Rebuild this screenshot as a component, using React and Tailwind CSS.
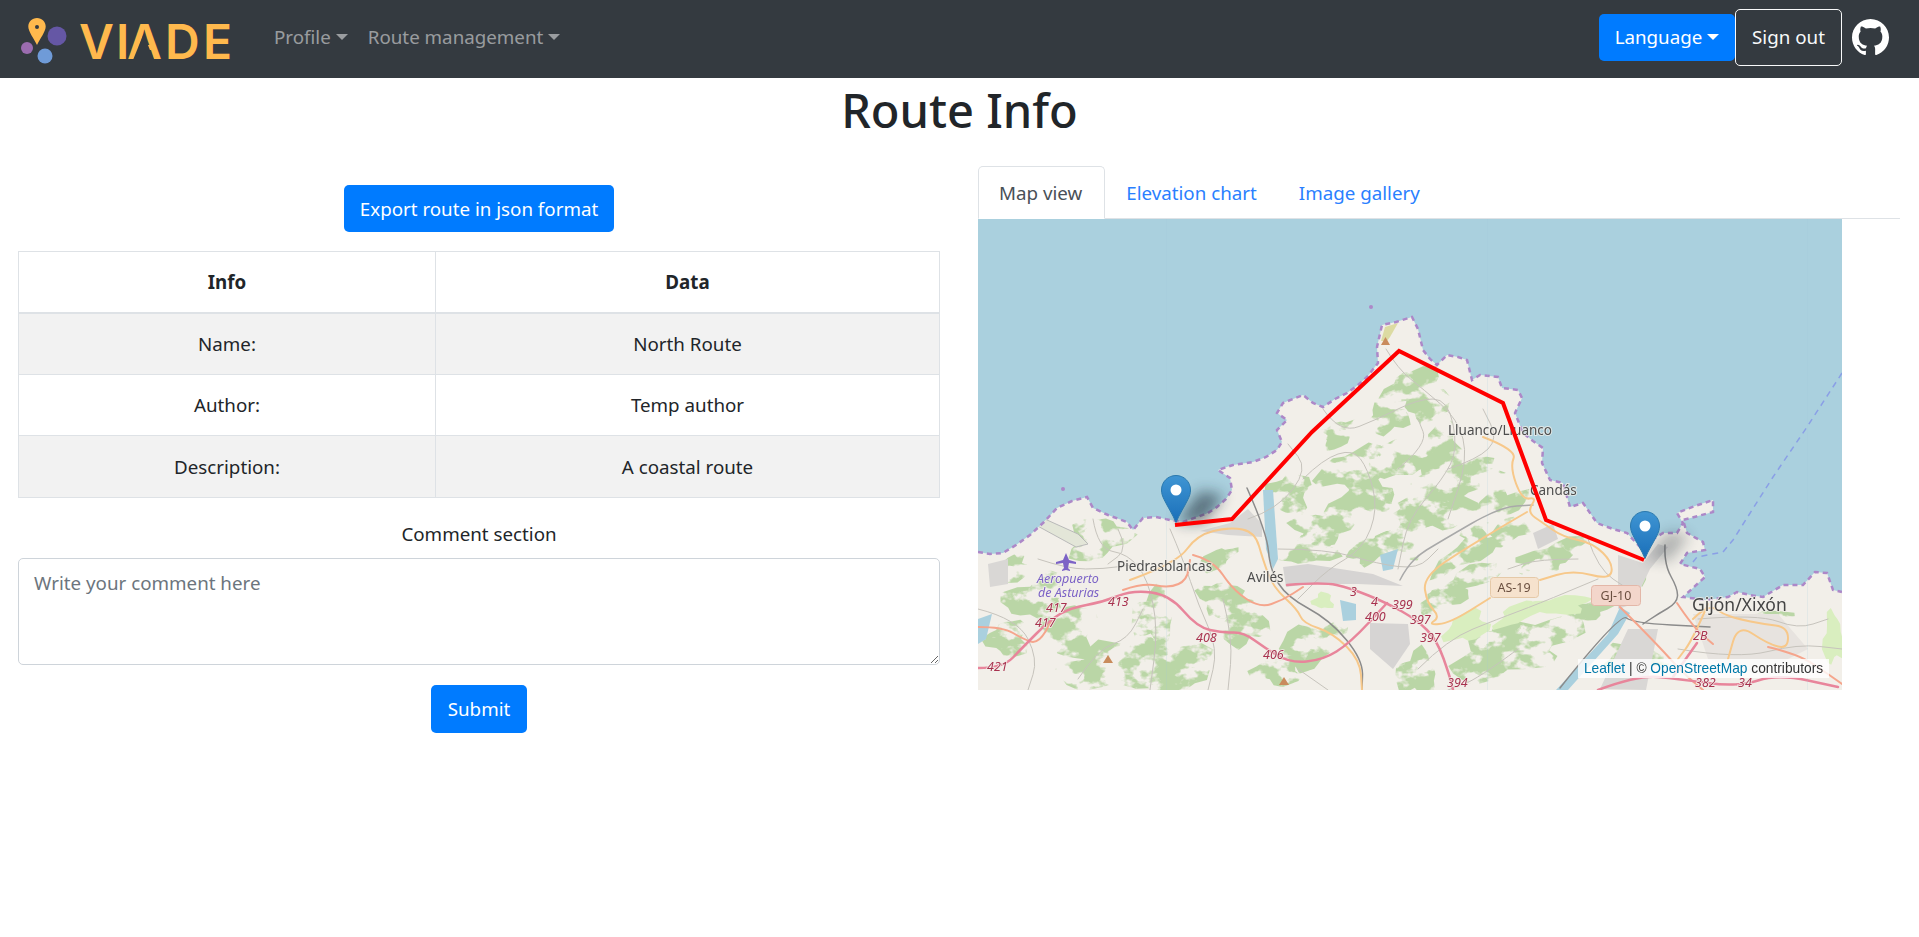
import React from "react";

// wobbly shape used as a mask for woods on the map
const blob = (cx, cy, rx, ry, rot = 0) => {
  const a = (rot * Math.PI) / 180;
  const pts = [];
  for (let i = 0; i < 18; i++) {
    const t = (i / 18) * Math.PI * 2;
    const w = 1 + 0.22 * Math.sin(t * 3 + cx) + 0.16 * Math.sin(t * 5 + cy);
    const x = Math.cos(t) * rx * w;
    const y = Math.sin(t) * ry * w;
    pts.push(
      `${(cx + x * Math.cos(a) - y * Math.sin(a)).toFixed(1)},${(cy + x * Math.sin(a) + y * Math.cos(a)).toFixed(1)}`
    );
  }
  return pts.join(" ");
};

// rounds a "x,y x,y" list into a path, roads on the tiles have no corners
const smooth = (list) => {
  const p = list.split(" ").map((s) => s.split(",").map(Number));
  let d = `M${p[0][0]} ${p[0][1]}`;
  for (let i = 1; i < p.length - 1; i++) {
    const mx = (p[i][0] + p[i + 1][0]) / 2;
    const my = (p[i][1] + p[i + 1][1]) / 2;
    d += `Q${p[i][0]} ${p[i][1]} ${mx} ${my}`;
  }
  const l = p[p.length - 1];
  return `${d}L${l[0]} ${l[1]}`;
};

const coastLine =
  "0,333 12,335 25,334 38,326 52,316 66,303 79,289 94,282 109,278 115,289 130,296 149,303 155,311 165,299 178,298 192,301 205,303 219,298 230,294 239,288 248,280 254,271 252,259 240,251 255,246 275,243 288,238 299,231 304,223 299,211 309,201 299,194 305,184 325,176 335,184 345,188 357,180 369,174 380,166 389,158 400,144 399,128 404,106 418,103 434,98 440,110 445,131 452,140 459,146 469,136 480,138 489,141 494,161 502,156 520,158 524,169 540,171 544,179 537,194 545,214 555,222 565,229 564,244 572,261 585,264 592,288 605,284 619,304 635,310 649,314 662,328 672,322 685,314 699,314 705,304 699,294 717,287 735,281 735,293 720,297 705,301 709,314 725,323 727,331 709,334 702,345 722,350 727,358 716,368 705,378 728,381 750,378 759,373 772,376 785,378 795,372 805,366 825,366 837,353 849,354 855,371 864,373";
const coast = `${coastLine} 864,471 0,471`;

const woods = [
  [120, 320, 30, 20, -20], [60, 378, 34, 20, -20], [92, 412, 26, 26, 0], [132, 450, 50, 22, 0],
  [192, 446, 44, 26, 10], [265, 402, 22, 26, 0], [335, 425, 34, 20, -20], [242, 380, 20, 18, 0],
  [175, 398, 20, 26, 0], [375, 251, 34, 20, -15], [342, 311, 28, 16, 0], [382, 284, 38, 20, -25],
  [422, 241, 26, 18, 0], [459, 284, 34, 30, 0], [332, 331, 30, 14, -10], [312, 274, 20, 20, 0],
  [425, 321, 28, 18, -20], [465, 234, 20, 30, 0], [439, 170, 30, 20, 0], [449, 188, 22, 14, 0],
  [489, 261, 38, 16, -30], [455, 278, 32, 14, -30], [442, 296, 26, 12, -20], [515, 291, 38, 13, -30],
  [489, 334, 38, 12, -30], [535, 311, 26, 11, -20], [575, 334, 36, 10, -20], [562, 351, 20, 9, -10],
  [489, 361, 38, 10, -25], [465, 380, 26, 11, -20], [555, 420, 50, 20, -15], [522, 438, 50, 22, -10],
  [439, 455, 20, 22, 0], [612, 391, 20, 9, -10], [30, 420, 20, 18, 0], [392, 330, 22, 12, -30],
  [360, 215, 20, 12, -30], [410, 200, 20, 14, 0], [300, 452, 24, 14, 0], [30, 352, 24, 12, -20],
  [240, 340, 18, 9, -30], [660, 350, 10, 18, 20], [790, 400, 28, 8, 0], [655, 440, 30, 14, 0],
];

const lightWoods = [
  [489, 408, 22, 14, -20], [582, 386, 30, 9, -5], [540, 395, 24, 9, -25], [855, 420, 10, 25, 0], [345, 382, 10, 8, 0],
];

const minorRoads = [
  "115,300 120,330 150,335 170,360 180,410 172,471",
  "192,310 205,340 220,385 240,430 230,471",
  "325,260 345,240 375,230 390,250 400,290 385,330 350,350 320,380",
  "345,190 362,215 400,200 440,180 470,180 480,230 465,260 430,300 420,350",
  "408,130 420,150 445,170 480,200 490,240 470,300",
  "300,330 350,330 400,345 440,350 460,330",
  "440,450 470,420 520,400 560,385 620,360",
  "60,340 90,350 125,350 160,345",
  "0,390 40,400 60,440 50,471",
  "245,380 255,420 250,471",
  "610,320 620,350 650,370",
  "600,340 560,340 530,350",
  "720,400 780,395 820,410 850,400",
  "700,430 760,440 820,425 864,430",
  "540,430 500,460 470,471",
  "320,450 350,471",
  "270,300 300,290 330,250 310,225",
  "420,250 450,225 440,200",
  "470,250 500,240 520,220 505,190",
  "140,310 150,330 130,345",
  "100,460 120,430 150,420 165,390",
];

const roads = [
  ["269,269 289,314 292,351 309,378 352,401 385,441 384,471", "#8b8b8b", 1.5],
  ["422,361 432,341 465,321 522,288 555,286", "#a9a9a9", 1.5],
  ["582,469 642,394 655,404 732,408", "#8b8b8b", 1.5],
  ["687,326 686,345 700,370 699,384 680,395 665,405", "#8b8b8b", 1.5],
  ["152,361 199,344 219,316 252,308 277,313 285,341 295,368 320,391 325,404 355,414 382,441 384,471", "#f7c88a", 2],
  ["505,218 539,231 532,248 544,281 559,278 549,293 565,304 585,318 615,324 635,344 632,361 595,351 562,361", "#f7c88a", 2],
  ["549,293 489,328 445,358 449,384 462,398 450,406 472,404 512,379", "#f7c88a", 2],
  ["715,400 730,385 745,395 760,400 785,405 810,408 810,430 790,425 760,405 750,440", "#f7c88a", 2],
  ["730,385 715,420 700,440", "#f7c88a", 2],
  ["0,408 25,408 45,420 60,425 75,400", "#f5a58c", 2],
  ["215,336 235,341 255,371 282,389 305,381 325,368", "#f5a58c", 2],
  ["145,371 165,364 192,369 209,361 212,341", "#f5a58c", 2],
  ["642,388 675,421 705,454 725,471", "#f5a58c", 2],
  ["699,384 715,408 735,425", "#f5a58c", 2],
  ["790,428 820,435 850,455 864,465", "#f5a58c", 2],
  ["0,449 25,449 45,428 72,401 92,389 125,383 155,371 192,376 219,408 245,414 265,413 287,429 312,444 345,441 372,424 409,384", "#e8859b", 2.5],
  ["309,366 345,363 372,369 409,384 439,401 459,421 472,458 475,471", "#e8859b", 2.5],
  ["695,458 719,424", "#e8859b", 2.5],
  ["620,471 660,456 700,460 760,468 800,455 860,468", "#e8859b", 2.5],
];

const numbers = [
  ["417", 68, 393], ["417", 57, 408], ["413", 130, 387], ["421", 9, 452], ["408", 218, 423],
  ["406", 285, 440], ["3", 372, 377], ["4", 393, 387], ["399", 414, 390], ["400", 387, 402],
  ["397", 432, 405], ["397", 442, 423], ["394", 469, 468], ["2B", 715, 421], ["382", 717, 468], ["34", 760, 468],
];

const Pin = ({ x, y }) => (
  <g transform={`translate(${x - 15} ${y - 48})`}>
    <path
      d="M15 .5C6.900 .5.500 6.900.500 15c0 3.500 1 6.200 2.600 9.500C6.500 31.500 12 40 15 47.500 18 40 23.500 31.500 26.900 24.500 28.500 21.200 29.500 18.500 29.500 15 29.500 6.900 23.100.5 15 .5z"
      fill="url(#pin)"
      stroke="#2a78ad"
    />
    <circle cx="15" cy="15" r="5.500" fill="#fff" />
  </g>
);

const RouteMap = () => (
  <svg viewBox="0 0 864 471" className="block w-full h-full">
    <defs>
      <linearGradient id="pin" x1="0" y1="0" x2="0" y2="1">
        <stop offset="0" stopColor="#3f95d3" />
        <stop offset="1" stopColor="#1a6fb9" />
      </linearGradient>
      <filter id="soft"><feGaussianBlur stdDeviation="0.45" /></filter>
      <filter id="shade" x="-60%" y="-60%" width="220%" height="220%"><feGaussianBlur stdDeviation="7" /></filter>
      <filter id="forest" x="0" y="0" width="864" height="471" filterUnits="userSpaceOnUse" colorInterpolationFilters="sRGB">
        <feTurbulence type="fractalNoise" baseFrequency="0.04 0.055" numOctaves="4" seed="8" result="n" />
        <feColorMatrix in="n" type="matrix" values="0 0 0 0 0.73  0 0 0 0 0.84  0 0 0 0 0.65  10 0 0 0 -4.300" result="patch" />
        <feComposite in="patch" in2="SourceAlpha" operator="in" />
      </filter>
      <clipPath id="land"><polygon points={coast} /></clipPath>
    </defs>
    <rect width="864" height="471" fill="#aad0de" />
    <g filter="url(#soft)">
      <polygon points={coast} fill="#f2efe9" />
      <g clipPath="url(#land)">
        <g filter="url(#forest)">
          {woods.map((w, i) => (
            <polygon key={i} points={blob(...w)} fill="#000" />
          ))}
        </g>
        {lightWoods.map((w, i) => (
          <polygon key={i} points={blob(...w)} fill="#d9eebf" />
        ))}
        <polygon points="305,348 330,345 395,355 425,367 380,365 330,365 308,368" fill="#d6d4d3" />
        <polygon points="392,404 430,405 432,425 415,450 392,430" fill="#d6d4d3" />
        <polygon points="555,314 575,305 580,320 560,330" fill="#d6d4d3" />
        <polygon points="222,312 252,304 270,290 284,305 284,318 250,316" fill="#d9d7d5" />
        <polygon points="640,336 665,344 680,325 690,328 672,350 655,385 640,390" fill="#d9d7d5" />
        <polygon points="622,470 650,410 680,410 668,471" fill="#d9d7d5" />
        <polygon points="715,395 800,395 830,430 780,455 730,440" fill="#e7e3df" />
        <polygon points="10,345 30,340 30,365 12,368" fill="#d9d7d5" />
        <polygon points="58,296 100,315 110,325 98,328 56,305" fill="#e3e6d8" stroke="#b9b9b9" />
        <polygon points="403,122 407,108 420,104 412,118 409,122" fill="#dcdba2" />
        <polygon points="285,271 295,271 300,340 295,350 288,330" fill="#aad0de" />
        <polygon points="362,381 378,385 378,401 365,402" fill="#aad0de" />
        <polygon points="402,336 420,330 415,350 405,352" fill="#aad0de" />
        <polygon points="0,400 14,395 8,420 0,425" fill="#aad0de" />
        <polygon points="642,388 652,394 640,415 590,471 578,471 630,415" fill="#aad0de" />
        <g fill="none" strokeLinecap="round">
          {minorRoads.map((d, i) => (
            <path key={i} d={smooth(d)} stroke="#c6c3bc" strokeWidth="1" />
          ))}
          {roads.map(([d, color, w], i) => (
            <path key={i} d={smooth(d)} stroke={color} strokeWidth={w} />
          ))}
        </g>
      </g>
      <polyline points={coastLine} fill="none" stroke="#ad88c8" strokeWidth="2.500" strokeDasharray="5 4" />
      <circle cx="85" cy="270" r="2" fill="#ad88c8" />
      <circle cx="393" cy="88" r="2" fill="#ad88c8" />
      <polygon points="403,126 412,126 407.500,118" fill="#c98b5c" />
      <polygon points="125,444 135,444 130,436" fill="#c98b5c" />
      <polygon points="301,466 311,466 306,458" fill="#c98b5c" />
      <polyline points="864,154 829,208 795,258 755,321 745,333 719,338 715,343" fill="none" stroke="#8a9fe6" strokeWidth="1.500" strokeDasharray="6 5" />
      <rect x="188" width="1" height="471" fill="#9fc7d6" opacity="0.18" />
      <rect x="509" width="1" height="471" fill="#9fc7d6" opacity="0.18" />
      <rect x="829" width="1" height="471" fill="#9fc7d6" opacity="0.18" />

      <g className="italic [paint-order:stroke]" fill="#a8324f" fontSize="12.500" stroke="#f2efe9" strokeWidth="1.500">
        {numbers.map(([t, x, y], i) => (
          <text key={i} x={x} y={y}>{t}</text>
        ))}
      </g>
      <g fontSize="12.500" fill="#7b62c6" className="italic [paint-order:stroke]" stroke="#f2efe9" strokeWidth="1.500">
        <text x="59" y="364">Aeropuerto</text>
        <text x="60" y="378">de Asturias</text>
      </g>
      <path d="M89 302l3 7 7 2v2l-7-1-1 5 2 2v1l-4-1-4 1v-1l2-2-1-5-7 1v-2l7-2z" fill="#7b62c6" transform="translate(-1 32)" />
      <g fill="#4d4d4d" fontSize="13.500" className="[paint-order:stroke]" stroke="#f2efe9" strokeOpacity="0.75" strokeWidth="2">
        <text x="139" y="352">Piedrasblancas</text>
        <text x="269" y="363">Avilés</text>
        <text x="470" y="216">Lluanco/Lluanco</text>
        <text x="552" y="276">Candás</text>
        <text x="714" y="392" fontSize="17.500" fill="#444">Gijón/Xixón</text>
      </g>
      <rect x="512.500" y="358.500" width="48" height="20" rx="3" fill="#f6e2cd" stroke="#e5c9a8" />
      <text x="536" y="373" textAnchor="middle" fontSize="12.500" fill="#6b5040">AS-19</text>
      <rect x="613.500" y="366.500" width="49" height="20" rx="3" fill="#f3d6cb" stroke="#e3b7a8" />
      <text x="638" y="381" textAnchor="middle" fontSize="12.500" fill="#6b5040">GJ-10</text>
    </g>

    <path d="M198 304L222 272L246 276L226 304Z" fill="#1c2c36" opacity="0.55" filter="url(#shade)" />
    <path d="M667 340L690 312L712 316L692 342Z" fill="#1c2c36" opacity="0.3" filter="url(#shade)" />
    <Pin x={198} y={304} />
    <Pin x={667} y={340} />
    <polyline
      points="197,306 254,300 334,213 421,132 525,184 568,301 666,341"
      fill="none"
      stroke="#ff0000"
      strokeWidth="4"
      strokeLinejoin="miter"
    />
  </svg>
);

const Caret = () => (
  <span className="inline-block ml-[5px] w-0 h-0 border-x-[6px] border-t-[6px] border-x-transparent border-t-current" />
);

const NavMenu = ({ label }) => (
  <a className="flex items-center text-white/50 leading-[30px]">
    {label}
    <Caret />
  </a>
);

const Row = ({ label, value, striped }) => (
  <tr className={striped ? "bg-[#f2f2f2]" : "bg-white"}>
    <td className="border border-[#dee2e6] p-[15px] leading-[30px] w-[417px]">{label}</td>
    <td className="border border-[#dee2e6] p-[15px] leading-[30px]">{value}</td>
  </tr>
);

export default function App() {
  return (
    <div className="min-h-screen bg-white text-[#212529] text-[18.75px] font-['Noto_Sans',sans-serif]">
      <nav className="flex items-center justify-between h-[78px] bg-[#343a40] pb-[4px] pl-[18px] pr-[30px]">
        <div className="flex items-center">
          <svg width="220" height="64" viewBox="18 5 220 64">
            <circle cx="57" cy="36" r="9.500" fill="#6557a5" />
            <circle cx="27" cy="48" r="6" fill="#9b6cb0" />
            <circle cx="45" cy="56" r="7.500" fill="#6f9bd8" />
            <path d="M37 18c-5 0-8.700 3.700-8.700 8.500 0 5 5.500 12 8.700 18.500 3.200-6.500 8.700-13.500 8.700-18.500 0-4.800-3.700-8.500-8.700-8.500z" fill="#ffb94d" />
            <circle cx="37" cy="27" r="2" fill="#343a40" />
            <text x="79 116 127 165 203" y="59" fontSize="48" fontWeight="600" fill="#ffb94d" fontFamily="Inter, sans-serif">
              VIADE
            </text>
            <polygon points="143.500,34 133,60 154,60" fill="#343a40" />
          </svg>
          <div className="flex items-center gap-[20px] ml-[36px]">
            <NavMenu label="Profile" />
            <NavMenu label="Route management" />
          </div>
        </div>
        <div className="flex items-center">
          <button className="flex items-center h-[47px] w-[136px] justify-center rounded-[5px] bg-[#007bff] text-white">
            Language
            <Caret />
          </button>
          <button className="h-[57px] w-[107px] rounded-[5px] border border-[#f8f9fa] text-[#f8f9fa]">Sign out</button>
          <svg className="ml-[10px] w-[37px] h-[37px]" viewBox="0 0 16 16" fill="#fff">
            <path d="M8 0C3.58 0 0 3.58 0 8c0 3.54 2.29 6.53 5.47 7.59.4.07.55-.17.55-.38 0-.19-.01-.82-.01-1.49-2.01.37-2.53-.49-2.69-.94-.09-.23-.48-.94-.82-1.13-.28-.15-.68-.52-.01-.53.63-.01 1.08.58 1.23.82.72 1.21 1.87.87 2.33.66.07-.52.28-.87.51-1.07-1.78-.2-3.64-.89-3.64-3.95 0-.87.31-1.59.82-2.15-.08-.2-.36-1.02.08-2.12 0 0 .67-.21 2.2.82.64-.18 1.32-.27 2-.27.68 0 1.36.09 2 .27 1.53-1.04 2.2-.82 2.2-.82.44 1.1.16 1.92.08 2.12.51.56.82 1.27.82 2.15 0 3.07-1.87 3.75-3.65 3.95.29.25.54.73.54 1.48 0 1.07-.01 1.93-.01 2.2 0 .21.15.46.55.38A8.013 8.013 0 0016 8c0-4.42-3.58-8-8-8z" />
          </svg>
        </div>
      </nav>

      <h1 className="mt-[2px] text-center text-[47px] leading-[60px] font-medium">Route Info</h1>

      <div className="flex gap-[38px] pl-[18px] pt-[1px]">
        <div className="w-[922px] pt-[44px] flex flex-col items-center">
          <button className="h-[47px] w-[270px] pt-[1px] rounded-[5px] bg-[#007bff] text-white">Export route in json format</button>
          <table className="mt-[19px] w-full border-collapse text-center">
            <thead>
              <tr>
                <th className="border border-[#dee2e6] border-b-2 p-[15px] leading-[30px] font-bold w-[417px]">Info</th>
                <th className="border border-[#dee2e6] border-b-2 p-[15px] leading-[30px] font-bold">Data</th>
              </tr>
            </thead>
            <tbody className="[&>tr:last-child>td]:leading-[31px]">
              <Row label="Name:" value="North Route" striped />
              <Row label="Author:" value="Temp author" />
              <Row label="Description:" value="A coastal route" striped />
            </tbody>
          </table>
          <p className="mt-[21px] leading-[30px]">Comment section</p>
          <textarea
            className="mt-[9px] block w-full h-[107px] rounded-[5px] border border-[#ced4da] px-[15px] py-[9px] leading-[30px] placeholder:text-[#6c757d]"
            placeholder="Write your comment here"
          />
          <button className="mt-[20px] h-[48px] w-[96px] rounded-[5px] bg-[#007bff] text-white">Submit</button>
        </div>

        <div className="w-[922px] pt-[25px]">
          <div className="flex h-[53px] border-b border-[#dee2e6]">
            <a className="h-[53px] pl-[20px] pr-[22px] pt-[2px] flex items-center rounded-t-[5px] border border-[#dee2e6] border-b-white text-[#495057]">Map view</a>
            <a className="h-[53px] px-[21px] pt-[2px] flex items-center text-[#2a7fff]">Elevation chart</a>
            <a className="h-[53px] px-[21px] pt-[2px] flex items-center text-[#2a7fff]">Image gallery</a>
          </div>
          <div className="relative w-[864px] h-[471px] overflow-hidden">
            <RouteMap />
            <div className="absolute right-[13px] bottom-[12px] h-[19px] w-[251px] bg-white/80 text-center text-[13.75px] leading-[19px] text-[#333] font-['Liberation_Sans',sans-serif]">
              <span className="text-[#0078a8]">Leaflet</span> | © <span className="text-[#0078a8]">OpenStreetMap</span> contributors
            </div>
          </div>
        </div>
      </div>
    </div>
  );
}
